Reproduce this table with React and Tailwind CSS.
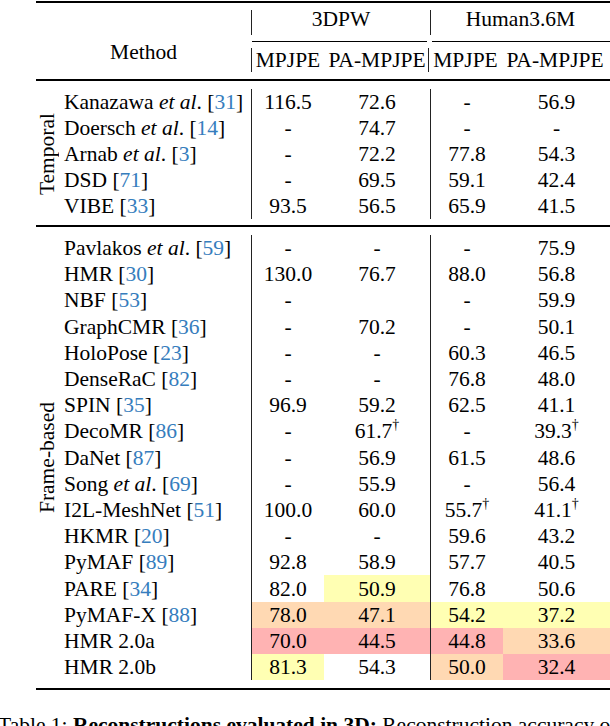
const temporal = [
  { name: 'Kanazawa', etal: true, ref: '31', v: ['116.5', '72.6', '-', '56.9'] },
  { name: 'Doersch', etal: true, ref: '14', v: ['-', '74.7', '-', '-'] },
  { name: 'Arnab', etal: true, ref: '3', v: ['-', '72.2', '77.8', '54.3'] },
  { name: 'DSD', ref: '71', v: ['-', '69.5', '59.1', '42.4'] },
  { name: 'VIBE', ref: '33', v: ['93.5', '56.5', '65.9', '41.5'] },
];

// y = yellow, o = orange, r = red highlight
const frameBased = [
  { name: 'Pavlakos', etal: true, ref: '59', v: ['-', '-', '-', '75.9'] },
  { name: 'HMR', ref: '30', v: ['130.0', '76.7', '88.0', '56.8'] },
  { name: 'NBF', ref: '53', v: ['-', '', '-', '59.9'] },
  { name: 'GraphCMR', ref: '36', v: ['-', '70.2', '-', '50.1'] },
  { name: 'HoloPose', ref: '23', v: ['-', '-', '60.3', '46.5'] },
  { name: 'DenseRaC', ref: '82', v: ['-', '-', '76.8', '48.0'] },
  { name: 'SPIN', ref: '35', v: ['96.9', '59.2', '62.5', '41.1'] },
  { name: 'DecoMR', ref: '86', v: ['-', '61.7†', '-', '39.3†'] },
  { name: 'DaNet', ref: '87', v: ['-', '56.9', '61.5', '48.6'] },
  { name: 'Song', etal: true, ref: '69', v: ['-', '55.9', '-', '56.4'] },
  { name: 'I2L-MeshNet', ref: '51', v: ['100.0', '60.0', '55.7†', '41.1†'] },
  { name: 'HKMR', ref: '20', v: ['-', '-', '59.6', '43.2'] },
  { name: 'PyMAF', ref: '89', v: ['92.8', '58.9', '57.7', '40.5'] },
  { name: 'PARE', ref: '34', v: ['82.0', '50.9', '76.8', '50.6'], hl: ['', 'y', '', ''] },
  { name: 'PyMAF-X', ref: '88', v: ['78.0', '47.1', '54.2', '37.2'], hl: ['o', 'o', 'y', 'y'] },
  { name: 'HMR 2.0a', v: ['70.0', '44.5', '44.8', '33.6'], hl: ['r', 'r', 'r', 'o'] },
  { name: 'HMR 2.0b', v: ['81.3', '54.3', '50.0', '32.4'], hl: ['y', '', 'o', 'r'] },
];

const hlColor = { y: 'bg-[#ffffb3]', o: 'bg-[#ffd9b3]', r: 'bg-[#ffb3b3]', '': '' };
const colClass = [
  'w-[73px] border-l border-[#222]',
  'w-[106px]',
  'w-[73px] border-l border-[#222]',
  'w-[107px]',
];

function Value({ text }) {
  if (text.endsWith('†')) {
    return (
      <span>
        {text.slice(0, -1)}
        <sup className="text-[14px] top-[-0.65em]">†</sup>
      </span>
    );
  }
  return <span>{text}</span>;
}

function MethodName({ row }) {
  return (
    <span className="whitespace-nowrap">
      {row.name}
      {row.etal && (
        <>
          {' '}<i>et al</i>.
        </>
      )}
      {row.ref && (
        <>
          {' '}[<span className="text-[#367dbd]">{row.ref}</span>]
        </>
      )}
    </span>
  );
}

function Section({ label, rows, rowH, pad }) {
  return (
    <div className={`flex ${pad}`}>
      <div className="w-[22px] flex items-center justify-center">
        <span className="[writing-mode:vertical-rl] rotate-180 leading-[22px] whitespace-nowrap">{label}</span>
      </div>
      <div className="flex-1">
        {rows.map((row) => (
          <div key={row.name} className={`flex ${rowH}`}>
            <div className="w-[193px] pl-[6px] flex items-center">
              <MethodName row={row} />
            </div>
            {row.v.map((val, i) => (
              <div
                key={i}
                className={`${colClass[i]} ${hlColor[(row.hl && row.hl[i]) || '']} flex items-center justify-center`}
              >
                <Value text={val} />
              </div>
            ))}
          </div>
        ))}
      </div>
    </div>
  );
}

export default function App() {
  return (
    <div className="w-[610px] h-[726px] overflow-hidden bg-white text-black font-[Liberation_Serif] text-[21.5px] leading-[26px]">
      <div className="ml-[36px] mt-[1px] border-t-2 border-black">
        {/* header */}
        <div className="flex border-b-2 border-black">
          <div className="w-[215px] pt-[36px] text-center">Method</div>
          <div className="w-[179px]">
            <div className="h-[38px] pt-[7px]">
              <div className="h-[25px] border-l border-[#222] flex justify-center">
                <span className="leading-[18px]">3DPW</span>
              </div>
            </div>
            <div className="h-px bg-black mr-[3px] ml-[1px]" />
            <div className="h-[37px] pt-[6px]">
              <div className="h-[24px] border-l border-[#222] flex">
                <div className="w-[72px] text-center leading-[24px]">MPJPE</div>
                <div className="w-[106px] text-center leading-[24px]">PA-MPJPE</div>
              </div>
            </div>
          </div>
          <div className="w-[180px]">
            <div className="h-[38px] pt-[7px]">
              <div className="h-[25px] border-l border-[#222] flex justify-center">
                <span className="leading-[18px]">Human3.6M</span>
              </div>
            </div>
            <div className="h-px bg-black ml-[2px]" />
            <div className="h-[37px] pt-[6px]">
              <div className="h-[24px] border-l border-[#222] flex -ml-[2px]">
                <div className="w-[73px] text-center leading-[24px]">MPJPE</div>
                <div className="w-[106px] text-center leading-[24px]">PA-MPJPE</div>
              </div>
            </div>
          </div>
        </div>

        <Section label="Temporal" rows={temporal} rowH="h-[26px]" pad="pt-[8px] pb-[6px]" />
        <div className="h-[2px] bg-black" />
        <Section label="Frame-based" rows={frameBased} rowH="h-[26.2px]" pad="pt-[8px] pb-[8px]" />
        <div className="h-[2px] bg-black" />
      </div>

      <p className="mt-[22px] -ml-[2px] whitespace-nowrap">
        Table 1: <b>Reconstructions evaluated in 3D:</b> Reconstruction accuracy of HMR 2.0
      </p>
    </div>
  );
}
